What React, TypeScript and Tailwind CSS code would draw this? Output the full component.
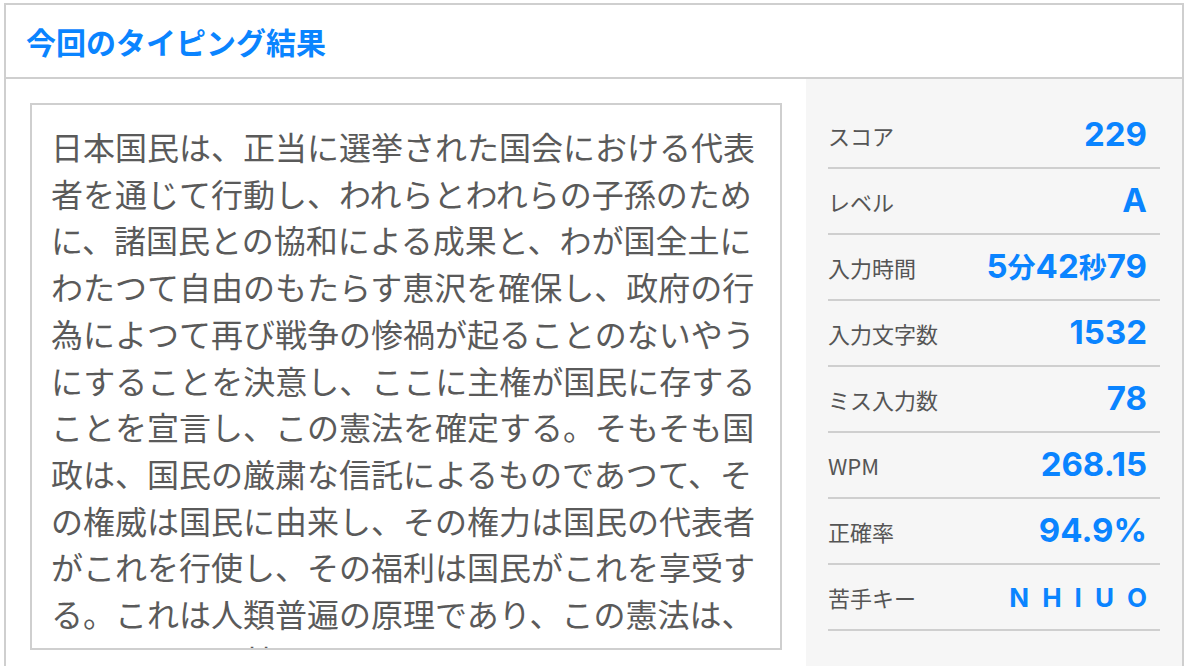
import React from "react";

const passage =
  "日本国民は、正当に選挙された国会における代表者を通じて行動し、われらとわれらの子孫のために、諸国民との協和による成果と、わが国全土にわたつて自由のもたらす恵沢を確保し、政府の行為によつて再び戦争の惨禍が起ることのないやうにすることを決意し、ここに主権が国民に存することを宣言し、この憲法を確定する。そもそも国政は、国民の厳粛な信託によるものであつて、その権威は国民に由来し、その権力は国民の代表者がこれを行使し、その福利は国民がこれを享受する。これは人類普遍の原理であり、この憲法は、かかる原理に基くものである。われらは、これに反する一切の憲法、法令及び詔勅を排除する。";

const stats: { label: string; value: string }[] = [
  { label: "スコア", value: "229" },
  { label: "レベル", value: "A" },
  { label: "入力時間", value: "5分42秒79" },
  { label: "入力文字数", value: "1532" },
  { label: "ミス入力数", value: "78" },
  { label: "WPM", value: "268.15" },
  { label: "正確率", value: "94.9%" },
];

const weakKeys = ["N", "H", "I", "U", "O"];

const jp = { fontFamily: '"Noto Sans CJK JP", sans-serif' };
const num = { fontFamily: 'Inter, "Noto Sans CJK JP", sans-serif' };

// kanji inside a value ("分", "秒") sit a little smaller than the digits
const Value = ({ text }: { text: string }) => (
  <span className="text-[33px] font-bold text-[#0a84ff]" style={num}>
    {text.split(/([^\x00-\x7f]+)/).map((part, i) =>
      /[^\x00-\x7f]/.test(part) ? (
        <span key={i} className="text-[28px]">
          {part}
        </span>
      ) : (
        <span key={i}>{part}</span>
      )
    )}
  </span>
);

const StatRow = ({ label, children }: { label: string; children: React.ReactNode }) => (
  <div className="flex h-[66px] items-center justify-between border-b-2 border-[#cfcfcf] pr-[13px]">
    <span className="text-[22px] text-[#555555]" style={jp}>
      {label}
    </span>
    {children}
  </div>
);

export default function App() {
  return (
    <div className="h-[666px] w-full overflow-hidden bg-white pl-[4px] pr-[4px] pt-[3px]">
      <div className="border-2 border-[#cfcfcf]">
        {/* Header */}
        <div className="flex h-[74px] items-center border-b-2 border-[#cfcfcf] pl-[20px]">
          <h1 className="text-[30px] font-bold text-[#0a84ff]" style={jp}>
            今回のタイピング結果
          </h1>
        </div>

        <div className="flex">
          {/* Typed text */}
          <div className="w-[800px] p-[24px]">
            <div className="h-[547px] overflow-hidden border-2 border-[#cfcfcf] pl-[19px] pr-[20px] pt-[18px]">
              <p className="text-[32px] leading-[46.7px] text-[#5a5a5a]" style={jp}>
                {passage}
              </p>
            </div>
          </div>

          {/* Results */}
          <div className="flex-1 bg-[#f6f6f6] px-[22px] pt-[24px] pb-[60px]">
            {stats.map((s) => (
              <StatRow key={s.label} label={s.label}>
                <Value text={s.value} />
              </StatRow>
            ))}
            <StatRow label="苦手キー">
              <span className="flex gap-[13px] text-[26px] font-bold text-[#0a84ff]" style={num}>
                {weakKeys.map((k) => (
                  <span key={k}>{k}</span>
                ))}
              </span>
            </StatRow>
          </div>
        </div>
      </div>
    </div>
  );
}
